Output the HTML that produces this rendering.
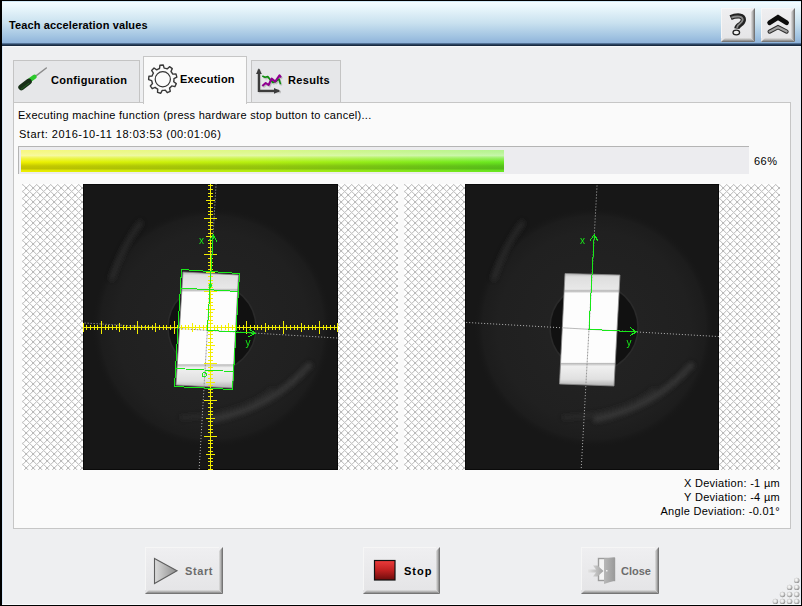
<!DOCTYPE html>
<html><head><meta charset="utf-8">
<style>
html,body{margin:0;padding:0;}
body{width:802px;height:606px;position:relative;overflow:hidden;background:#eeeff1;font-family:"Liberation Sans",sans-serif;color:#000;}
.abs{position:absolute;}

#title{left:2px;top:1px;width:799px;height:45px;
 background:linear-gradient(to bottom,#cfe8f6 0px,#cfe8f6 1px,#f4fcff 1px,#eaf7fc 6px,#c9e1ef 22px,#a6c7e3 34px,#8fb3da 42px,#6a8cb4 42px,#3a5676 43px,#1c2e46 44px,#15263b 45px);}
#titletext{left:9px;top:19px;font-size:11px;font-weight:bold;white-space:nowrap;letter-spacing:0.125px;}
.panel{left:13px;top:102px;width:778px;height:427px;background:#fafafa;border:1px solid #c6c6c6;box-sizing:border-box;}
.tab{top:60px;height:43px;background:#e6e7e9;border:1px solid #c4c4c4;border-bottom:none;box-sizing:border-box;}
.tabsel{top:56px;height:48px;background:#fafafa;border:1px solid #c6c6c6;border-bottom:none;box-sizing:border-box;}
.tablabel{font-size:11px;font-weight:bold;white-space:nowrap;}
.txt{font-size:11px;white-space:nowrap;}
</style></head><body>
<div id="title" class="abs"></div>
<div class="abs" style="left:2px;top:46px;width:799px;height:1px;background:#f8f9fa"></div>
<div id="titletext" class="abs">Teach acceleration values</div>
<svg class="abs" style="left:721px;top:8px" width="34" height="34" viewBox="0 0 34 34">
<defs>
<linearGradient id="hbf" x1="0" y1="0" x2="0" y2="1"><stop offset="0" stop-color="#efeff1"/><stop offset="1" stop-color="#e4e4e6"/></linearGradient>
<linearGradient id="hbr" x1="0" y1="0" x2="1" y2="0"><stop offset="0" stop-color="#e0e0e0"/><stop offset="0.45" stop-color="#b0b0b0"/><stop offset="1" stop-color="#646464"/></linearGradient>
<linearGradient id="hbb" x1="0" y1="0" x2="0" y2="1"><stop offset="0" stop-color="#e0e0e0"/><stop offset="0.45" stop-color="#b0b0b0"/><stop offset="1" stop-color="#646464"/></linearGradient>
</defs>
<rect x="0" y="0" width="34" height="34" fill="url(#hbf)"/>
<rect x="0" y="0" width="30" height="1" fill="#f6f6f6"/>
<rect x="0" y="0" width="1" height="30" fill="#f6f6f6"/>
<polygon points="30,4 34,0 34,34 30,30" fill="url(#hbr)"/>
<polygon points="0,34 4,30 30,30 34,34" fill="url(#hbb)"/>
<path d="M9.6 9.6 Q14 7.6 18.6 8 Q22.6 8.7 22.4 11.9 Q22 14.6 19.2 16.4 Q16.1 18.2 15.8 20.6" fill="none" stroke="#222" stroke-width="5.2" stroke-linecap="butt" stroke-linejoin="round"/>
<path d="M10.4 9.6 Q14 8.2 18.6 8.6 Q21.8 9.2 21.7 11.9 Q21.3 14.1 18.8 15.8 Q16.3 17.4 16 19.8" fill="none" stroke="#8a8a8a" stroke-width="1.9" stroke-linecap="butt" stroke-linejoin="round"/>
<ellipse cx="15.3" cy="24.5" rx="3.3" ry="2.3" fill="#f0f0f0" stroke="#222" stroke-width="1.3"/>
</svg>
<svg class="abs" style="left:761px;top:8px" width="34" height="34" viewBox="0 0 34 34">
<defs>
<linearGradient id="cbf" x1="0" y1="0" x2="0" y2="1"><stop offset="0" stop-color="#efeff1"/><stop offset="1" stop-color="#e4e4e6"/></linearGradient>
<linearGradient id="cbr" x1="0" y1="0" x2="1" y2="0"><stop offset="0" stop-color="#e0e0e0"/><stop offset="0.45" stop-color="#b0b0b0"/><stop offset="1" stop-color="#646464"/></linearGradient>
<linearGradient id="cbb" x1="0" y1="0" x2="0" y2="1"><stop offset="0" stop-color="#e0e0e0"/><stop offset="0.45" stop-color="#b0b0b0"/><stop offset="1" stop-color="#646464"/></linearGradient>
</defs>
<rect x="0" y="0" width="34" height="34" fill="url(#cbf)"/>
<rect x="0" y="0" width="30" height="1" fill="#f6f6f6"/>
<rect x="0" y="0" width="1" height="30" fill="#f6f6f6"/>
<polygon points="30,4 34,0 34,34 30,30" fill="url(#cbr)"/>
<polygon points="0,34 4,30 30,30 34,34" fill="url(#cbb)"/>
<polyline points="8.6,14.8 17,9.4 25.6,14.8" fill="none" stroke="#0c0c0c" stroke-width="4.7" stroke-linecap="round" stroke-linejoin="miter"/>
<polyline points="8.6,23.6 17,19.2 25.6,23.6" fill="none" stroke="#2a2a2a" stroke-width="4.2" stroke-linecap="round" stroke-linejoin="miter"/>
<polyline points="8.6,23.6 17,19.2 25.6,23.6" fill="none" stroke="#a0a0a0" stroke-width="2.2" stroke-linecap="round" stroke-linejoin="miter"/>
</svg>

<div class="abs tab" style="left:13px;width:127px"></div>
<div class="abs tab" style="left:251px;width:90px"></div>
<div class="abs panel"></div>
<div class="abs tabsel" style="left:143px;width:104px"></div>
<svg class="abs" style="left:14px;top:62px" width="36" height="32" viewBox="14 62 36 32">
<line x1="35" y1="76.6" x2="46.3" y2="68" stroke="#8c8c8c" stroke-width="1.5" stroke-linecap="round"/>
<line x1="30" y1="80" x2="34.5" y2="76.8" stroke="#2cc82c" stroke-width="4.4" stroke-linecap="round"/>
<line x1="21.3" y1="87.3" x2="28.8" y2="81.6" stroke="#183018" stroke-width="6" stroke-linecap="round"/>
<line x1="21.3" y1="89" x2="29" y2="83.2" stroke="#2a8a2a" stroke-width="0.9" stroke-linecap="round" opacity="0.6"/>
</svg>
<svg class="abs" style="left:144px;top:60px" width="40" height="40" viewBox="144 60 40 40">
<path d="M158.07 69.05 L159.53 68.49 L159.9 65.3 L163.25 65.01 L164.16 68.08 L165.7 68.38 L167.18 68.89 L169.51 66.69 L172.26 68.61 L170.99 71.56 L171.97 72.78 L172.78 74.12 L175.98 73.93 L176.85 77.17 L173.98 78.61 L173.96 80.18 L173.71 81.72 L176.29 83.64 L174.87 86.68 L171.74 85.94 L170.72 87.12 L169.54 88.14 L170.28 91.27 L167.24 92.69 L165.32 90.11 L163.78 90.36 L162.21 90.38 L160.77 93.25 L157.53 92.38 L157.72 89.18 L156.38 88.37 L155.16 87.39 L152.21 88.66 L150.29 85.91 L152.49 83.58 L151.98 82.1 L151.68 80.56 L148.61 79.65 L148.9 76.3 L152.09 75.93 L152.65 74.47 L153.41 73.1 L151.64 70.42 L154.02 68.04 L156.7 69.81 Z" fill="#fbfbfb" stroke="#383838" stroke-width="1.4" stroke-linejoin="round"/>
<circle cx="162.8" cy="79.2" r="7.6" fill="none" stroke="#333" stroke-width="1.2"/>
</svg>
<svg class="abs" style="left:252px;top:64px" width="34" height="32" viewBox="252 64 34 32">
<g opacity="0.35" transform="translate(1,1.2)">
<polyline points="262.3,76 265,77.3 267.8,76.6 270,79.4 272.8,82.4 276.3,81.2 279,79 280.5,84.2" fill="none" stroke="#777" stroke-width="1.8"/>
<polyline points="262.3,86 265.7,83 268.6,85 271.6,78.6 275.2,81.6 279.5,75.3 281,77.5" fill="none" stroke="#777" stroke-width="2.2"/>
<polyline points="258.9,69 258.9,90.9 280,90.9" fill="none" stroke="#888" stroke-width="2.4"/>
</g>
<polyline points="258.9,69.5 258.9,90.9 279,90.9" fill="none" stroke="#3c3c3c" stroke-width="2.3"/>
<polygon points="256,74 258.9,68.3 261.8,74" fill="#3c3c3c"/>
<polygon points="274,88 280.5,90.9 274,93.8" fill="#3c3c3c"/>
<polyline points="262.3,76 265,77.3 267.8,76.6 270,79.4 272.8,82.4 276.3,81.2 279,79 280.5,84.2" fill="none" stroke="#0c8c0c" stroke-width="1.6" stroke-linejoin="round"/>
<polyline points="262.3,86 265.7,83 268.6,85 271.6,78.6 275.2,81.6 279.5,75.3 281,77.5" fill="none" stroke="#900090" stroke-width="2.1" stroke-linejoin="round"/>
</svg>
<div class="abs tablabel" style="left:51px;top:74px;letter-spacing:0.33px">Configuration</div>
<div class="abs tablabel" style="left:180px;top:73px;letter-spacing:0.25px">Execution</div>
<div class="abs tablabel" style="left:288px;top:74px;letter-spacing:0.33px">Results</div>

<div class="abs txt" style="left:18px;top:109px;letter-spacing:0.28px">Executing machine function (press hardware stop button to cancel)...</div>
<div class="abs txt" style="left:19px;top:128px;letter-spacing:0.5px">Start: 2016-10-11 18:03:53 (00:01:06)</div>

<div class="abs" style="left:18px;top:146px;width:731px;height:28px;background:#ececef;border-top:1px solid #b4b4b4;border-left:1px solid #b4b4b4;box-sizing:border-box"></div>
<div class="abs" style="left:21px;top:150px;width:483px;height:22px;background:linear-gradient(to bottom,rgba(255,255,255,0.5) 0px,rgba(255,255,255,0.52) 2px,rgba(255,255,255,0.62) 5.5px,rgba(255,255,255,0.32) 8px,rgba(255,255,255,0.08) 11px,rgba(255,255,255,0) 12px,rgba(0,0,0,0.06) 13.5px,rgba(0,0,0,0.17) 16px,rgba(0,0,0,0.2) 19px,rgba(0,0,0,0.04) 20px,rgba(0,0,0,0) 22px),linear-gradient(to right,#f0f000,#b4f010 50%,#68e820)"></div>
<div class="abs txt" style="left:754px;top:155px;letter-spacing:0.5px">66%</div>

<svg class="abs" style="left:22px;top:184px" width="758" height="286" viewBox="0 0 758 286">
<defs>
<pattern id="h1" x="0" y="0" width="7" height="7" patternUnits="userSpaceOnUse"><rect width="7" height="7" fill="#fff"/><g shape-rendering="crispEdges"><g fill="#eeeeee"><rect x="0" y="1" width="1" height="1"/><rect x="0" y="6" width="1" height="1"/><rect x="1" y="0" width="1" height="1"/><rect x="2" y="1" width="1" height="1"/><rect x="2" y="6" width="1" height="1"/><rect x="3" y="2" width="1" height="1"/><rect x="3" y="5" width="1" height="1"/><rect x="5" y="3" width="1" height="1"/><rect x="5" y="4" width="1" height="1"/><rect x="6" y="2" width="1" height="1"/><rect x="6" y="5" width="1" height="1"/></g><g fill="#c8c8c8"><rect x="0" y="0" width="1" height="1"/><rect x="1" y="1" width="1" height="1"/><rect x="1" y="6" width="1" height="1"/><rect x="2" y="2" width="1" height="1"/><rect x="2" y="5" width="1" height="1"/><rect x="5" y="2" width="1" height="1"/><rect x="5" y="5" width="1" height="1"/><rect x="6" y="1" width="1" height="1"/><rect x="6" y="6" width="1" height="1"/></g><g fill="#bababa"><rect x="3" y="3" width="1" height="1"/><rect x="3" y="4" width="1" height="1"/><rect x="4" y="3" width="1" height="1"/><rect x="4" y="4" width="1" height="1"/></g></g></pattern>
<pattern id="h2" x="382" y="0" width="7" height="7" patternUnits="userSpaceOnUse"><rect width="7" height="7" fill="#fff"/><g shape-rendering="crispEdges"><g fill="#eeeeee"><rect x="0" y="1" width="1" height="1"/><rect x="0" y="6" width="1" height="1"/><rect x="1" y="0" width="1" height="1"/><rect x="2" y="1" width="1" height="1"/><rect x="2" y="6" width="1" height="1"/><rect x="3" y="2" width="1" height="1"/><rect x="3" y="5" width="1" height="1"/><rect x="5" y="3" width="1" height="1"/><rect x="5" y="4" width="1" height="1"/><rect x="6" y="2" width="1" height="1"/><rect x="6" y="5" width="1" height="1"/></g><g fill="#c8c8c8"><rect x="0" y="0" width="1" height="1"/><rect x="1" y="1" width="1" height="1"/><rect x="1" y="6" width="1" height="1"/><rect x="2" y="2" width="1" height="1"/><rect x="2" y="5" width="1" height="1"/><rect x="5" y="2" width="1" height="1"/><rect x="5" y="5" width="1" height="1"/><rect x="6" y="1" width="1" height="1"/><rect x="6" y="6" width="1" height="1"/></g><g fill="#bababa"><rect x="3" y="3" width="1" height="1"/><rect x="3" y="4" width="1" height="1"/><rect x="4" y="3" width="1" height="1"/><rect x="4" y="4" width="1" height="1"/></g></g></pattern>
<radialGradient id="ring"><stop offset="0" stop-color="#181818" stop-opacity="0"/><stop offset="0.38" stop-color="#222" stop-opacity="1"/><stop offset="0.8" stop-color="#202020" stop-opacity="1"/><stop offset="0.93" stop-color="#1e1e1e" stop-opacity="0.8"/><stop offset="1" stop-color="#181818" stop-opacity="0"/></radialGradient>
<linearGradient id="objg" x1="0" y1="0" x2="0" y2="1"><stop offset="0" stop-color="#b8b8b8"/><stop offset="0.03" stop-color="#dedede"/><stop offset="0.14" stop-color="#e8e8e8"/><stop offset="0.155" stop-color="#b4b4b4"/><stop offset="0.175" stop-color="#fdfdfd"/><stop offset="0.79" stop-color="#fdfdfd"/><stop offset="0.8" stop-color="#bcbcbc"/><stop offset="0.825" stop-color="#f0f0f0"/><stop offset="0.94" stop-color="#e0e0e0"/><stop offset="1" stop-color="#b0b0b0"/></linearGradient>
<filter id="sblur" x="-20%" y="-20%" width="140%" height="140%"><feGaussianBlur stdDeviation="2"/></filter>
<filter id="hblur" x="0" y="0" width="100%" height="100%"><feGaussianBlur stdDeviation="0.5"/></filter>
<filter id="blur1" x="-10%" y="-10%" width="120%" height="120%"><feGaussianBlur stdDeviation="1"/></filter>
<clipPath id="c1"><rect x="61" y="0" width="255" height="286"/></clipPath>
<clipPath id="c2"><rect x="443" y="0" width="254" height="286"/></clipPath>
<clipPath id="ob1"><polygon points="161,88 216.5,91 210.5,204 154,201"/></clipPath><clipPath id="ob2"><polygon points="543,89.5 598,91 592,202 537.5,200"/></clipPath>
</defs>
<rect x="0" y="0" width="376" height="286" fill="#fff"/><rect x="382" y="0" width="376" height="286" fill="#fff"/>
<g><rect x="0" y="0" width="376" height="286" fill="url(#h1)"/>
<rect x="382" y="0" width="376" height="286" fill="url(#h2)"/></g>
<g stroke="#ffffff" stroke-width="1" stroke-dasharray="1 2"><line x1="-413.54" y1="110.72" x2="784.34" y2="181.88"/><line x1="220.98" y1="-452.64" x2="149.82" y2="745.24"/><line x1="-32.06" y1="111.81" x2="1166.06" y2="178.79"/><line x1="600.49" y1="-453.76" x2="533.51" y2="744.36"/></g>
<g clip-path="url(#c1)"><rect x="61" y="0" width="255" height="286" fill="#171717"/><circle cx="190" cy="143.5" r="120" fill="url(#ring)"/><g fill="none" stroke-linecap="round" filter="url(#sblur)"><path d="M192 235.5 Q250 223.5 287 181.5" stroke="#383838" stroke-width="6" opacity="0.85"/><path d="M160 233.5 Q220 231.5 250 205.5" stroke="#2c2c2c" stroke-width="4" opacity="0.7"/><path d="M90 93.5 Q100 63.5 118 39.5" stroke="#2c2c2c" stroke-width="6" opacity="0.7"/></g><circle cx="190" cy="143.5" r="44" fill="#111111" stroke="#2a2a2a" stroke-width="1.5"/><polygon points="161,88 216.5,91 210.5,204 154,201" fill="url(#objg)" stroke="#8a8a8a" stroke-width="1" stroke-opacity="0.8"/><rect x="61.5" y="0.5" width="254" height="285" fill="none" stroke="#0a0a0a" stroke-width="1"/>
<g stroke-width="1" stroke-dasharray="1 2"><g stroke="#b8b8b8"><line x1="-413.54" y1="110.72" x2="784.34" y2="181.88"/><line x1="220.98" y1="-452.64" x2="149.82" y2="745.24"/></g><g stroke="#787878" stroke-dashoffset="1.5" clip-path="url(#ob1)"><line x1="-413.54" y1="110.72" x2="784.34" y2="181.88"/><line x1="220.98" y1="-452.64" x2="149.82" y2="745.24"/></g></g>
<g shape-rendering="crispEdges"><rect x="188" y="0" width="1" height="286" fill="#f2ee00"/><rect x="61" y="143" width="255" height="1" fill="#f2ee00"/><rect x="186" y="1.27" width="5" height="1" fill="#f2ee00"/><rect x="186" y="4.91" width="5" height="1" fill="#f2ee00"/><rect x="186" y="8.54" width="5" height="1" fill="#f2ee00"/><rect x="186" y="12.18" width="5" height="1" fill="#f2ee00"/><rect x="60.81" y="139" width="1" height="9" fill="#f2ee00"/><rect x="184" y="15.81" width="9" height="1" fill="#f2ee00"/><rect x="64.44" y="141" width="1" height="5" fill="#f2ee00"/><rect x="186" y="19.44" width="5" height="1" fill="#f2ee00"/><rect x="68.08" y="141" width="1" height="5" fill="#f2ee00"/><rect x="186" y="23.08" width="5" height="1" fill="#f2ee00"/><rect x="71.71" y="141" width="1" height="5" fill="#f2ee00"/><rect x="186" y="26.71" width="5" height="1" fill="#f2ee00"/><rect x="75.35" y="141" width="1" height="5" fill="#f2ee00"/><rect x="186" y="30.35" width="5" height="1" fill="#f2ee00"/><rect x="78.98" y="137" width="1" height="13" fill="#f2ee00"/><rect x="182" y="33.98" width="13" height="1" fill="#f2ee00"/><rect x="82.61" y="141" width="1" height="5" fill="#f2ee00"/><rect x="186" y="37.61" width="5" height="1" fill="#f2ee00"/><rect x="86.25" y="141" width="1" height="5" fill="#f2ee00"/><rect x="186" y="41.25" width="5" height="1" fill="#f2ee00"/><rect x="89.88" y="141" width="1" height="5" fill="#f2ee00"/><rect x="186" y="44.88" width="5" height="1" fill="#f2ee00"/><rect x="93.52" y="141" width="1" height="5" fill="#f2ee00"/><rect x="186" y="48.52" width="5" height="1" fill="#f2ee00"/><rect x="97.15" y="139" width="1" height="9" fill="#f2ee00"/><rect x="184" y="52.15" width="9" height="1" fill="#f2ee00"/><rect x="100.78" y="141" width="1" height="5" fill="#f2ee00"/><rect x="186" y="55.78" width="5" height="1" fill="#f2ee00"/><rect x="104.42" y="141" width="1" height="5" fill="#f2ee00"/><rect x="186" y="59.42" width="5" height="1" fill="#f2ee00"/><rect x="108.05" y="141" width="1" height="5" fill="#f2ee00"/><rect x="186" y="63.05" width="5" height="1" fill="#f2ee00"/><rect x="111.69" y="141" width="1" height="5" fill="#f2ee00"/><rect x="186" y="66.69" width="5" height="1" fill="#f2ee00"/><rect x="115.32" y="137" width="1" height="13" fill="#f2ee00"/><rect x="182" y="70.32" width="13" height="1" fill="#f2ee00"/><rect x="118.95" y="141" width="1" height="5" fill="#f2ee00"/><rect x="186" y="73.95" width="5" height="1" fill="#f2ee00"/><rect x="122.59" y="141" width="1" height="5" fill="#f2ee00"/><rect x="186" y="77.59" width="5" height="1" fill="#f2ee00"/><rect x="126.22" y="141" width="1" height="5" fill="#f2ee00"/><rect x="186" y="81.22" width="5" height="1" fill="#f2ee00"/><rect x="129.86" y="141" width="1" height="5" fill="#f2ee00"/><rect x="186" y="84.86" width="5" height="1" fill="#f2ee00"/><rect x="133.49" y="139" width="1" height="9" fill="#f2ee00"/><rect x="184" y="88.49" width="9" height="1" fill="#f2ee00"/><rect x="137.12" y="141" width="1" height="5" fill="#f2ee00"/><rect x="186" y="92.12" width="5" height="1" fill="#f2ee00"/><rect x="140.76" y="141" width="1" height="5" fill="#f2ee00"/><rect x="186" y="95.76" width="5" height="1" fill="#f2ee00"/><rect x="144.39" y="141" width="1" height="5" fill="#f2ee00"/><rect x="186" y="99.39" width="5" height="1" fill="#f2ee00"/><rect x="148.03" y="141" width="1" height="5" fill="#f2ee00"/><rect x="186" y="103.03" width="5" height="1" fill="#f2ee00"/><rect x="151.66" y="137" width="1" height="13" fill="#f2ee00"/><rect x="182" y="106.66" width="13" height="1" fill="#f2ee00"/><rect x="155.29" y="141" width="1" height="5" fill="#f2ee00"/><rect x="186" y="110.29" width="5" height="1" fill="#f2ee00"/><rect x="158.93" y="141" width="1" height="5" fill="#f2ee00"/><rect x="186" y="113.93" width="5" height="1" fill="#f2ee00"/><rect x="162.56" y="141" width="1" height="5" fill="#f2ee00"/><rect x="186" y="117.56" width="5" height="1" fill="#f2ee00"/><rect x="166.2" y="141" width="1" height="5" fill="#f2ee00"/><rect x="186" y="121.2" width="5" height="1" fill="#f2ee00"/><rect x="169.83" y="139" width="1" height="9" fill="#f2ee00"/><rect x="184" y="124.83" width="9" height="1" fill="#f2ee00"/><rect x="173.46" y="141" width="1" height="5" fill="#f2ee00"/><rect x="186" y="128.46" width="5" height="1" fill="#f2ee00"/><rect x="177.1" y="141" width="1" height="5" fill="#f2ee00"/><rect x="186" y="132.1" width="5" height="1" fill="#f2ee00"/><rect x="180.73" y="141" width="1" height="5" fill="#f2ee00"/><rect x="186" y="135.73" width="5" height="1" fill="#f2ee00"/><rect x="184.37" y="141" width="1" height="5" fill="#f2ee00"/><rect x="186" y="139.37" width="5" height="1" fill="#f2ee00"/><rect x="188" y="137" width="1" height="13" fill="#f2ee00"/><rect x="182" y="143" width="13" height="1" fill="#f2ee00"/><rect x="191.63" y="141" width="1" height="5" fill="#f2ee00"/><rect x="186" y="146.63" width="5" height="1" fill="#f2ee00"/><rect x="195.27" y="141" width="1" height="5" fill="#f2ee00"/><rect x="186" y="150.27" width="5" height="1" fill="#f2ee00"/><rect x="198.9" y="141" width="1" height="5" fill="#f2ee00"/><rect x="186" y="153.9" width="5" height="1" fill="#f2ee00"/><rect x="202.54" y="141" width="1" height="5" fill="#f2ee00"/><rect x="186" y="157.54" width="5" height="1" fill="#f2ee00"/><rect x="206.17" y="139" width="1" height="9" fill="#f2ee00"/><rect x="184" y="161.17" width="9" height="1" fill="#f2ee00"/><rect x="209.8" y="141" width="1" height="5" fill="#f2ee00"/><rect x="186" y="164.8" width="5" height="1" fill="#f2ee00"/><rect x="213.44" y="141" width="1" height="5" fill="#f2ee00"/><rect x="186" y="168.44" width="5" height="1" fill="#f2ee00"/><rect x="217.07" y="141" width="1" height="5" fill="#f2ee00"/><rect x="186" y="172.07" width="5" height="1" fill="#f2ee00"/><rect x="220.71" y="141" width="1" height="5" fill="#f2ee00"/><rect x="186" y="175.71" width="5" height="1" fill="#f2ee00"/><rect x="224.34" y="137" width="1" height="13" fill="#f2ee00"/><rect x="182" y="179.34" width="13" height="1" fill="#f2ee00"/><rect x="227.97" y="141" width="1" height="5" fill="#f2ee00"/><rect x="186" y="182.97" width="5" height="1" fill="#f2ee00"/><rect x="231.61" y="141" width="1" height="5" fill="#f2ee00"/><rect x="186" y="186.61" width="5" height="1" fill="#f2ee00"/><rect x="235.24" y="141" width="1" height="5" fill="#f2ee00"/><rect x="186" y="190.24" width="5" height="1" fill="#f2ee00"/><rect x="238.88" y="141" width="1" height="5" fill="#f2ee00"/><rect x="186" y="193.88" width="5" height="1" fill="#f2ee00"/><rect x="242.51" y="139" width="1" height="9" fill="#f2ee00"/><rect x="184" y="197.51" width="9" height="1" fill="#f2ee00"/><rect x="246.14" y="141" width="1" height="5" fill="#f2ee00"/><rect x="186" y="201.14" width="5" height="1" fill="#f2ee00"/><rect x="249.78" y="141" width="1" height="5" fill="#f2ee00"/><rect x="186" y="204.78" width="5" height="1" fill="#f2ee00"/><rect x="253.41" y="141" width="1" height="5" fill="#f2ee00"/><rect x="186" y="208.41" width="5" height="1" fill="#f2ee00"/><rect x="257.05" y="141" width="1" height="5" fill="#f2ee00"/><rect x="186" y="212.05" width="5" height="1" fill="#f2ee00"/><rect x="260.68" y="137" width="1" height="13" fill="#f2ee00"/><rect x="182" y="215.68" width="13" height="1" fill="#f2ee00"/><rect x="264.31" y="141" width="1" height="5" fill="#f2ee00"/><rect x="186" y="219.31" width="5" height="1" fill="#f2ee00"/><rect x="267.95" y="141" width="1" height="5" fill="#f2ee00"/><rect x="186" y="222.95" width="5" height="1" fill="#f2ee00"/><rect x="271.58" y="141" width="1" height="5" fill="#f2ee00"/><rect x="186" y="226.58" width="5" height="1" fill="#f2ee00"/><rect x="275.22" y="141" width="1" height="5" fill="#f2ee00"/><rect x="186" y="230.22" width="5" height="1" fill="#f2ee00"/><rect x="278.85" y="139" width="1" height="9" fill="#f2ee00"/><rect x="184" y="233.85" width="9" height="1" fill="#f2ee00"/><rect x="282.48" y="141" width="1" height="5" fill="#f2ee00"/><rect x="186" y="237.48" width="5" height="1" fill="#f2ee00"/><rect x="286.12" y="141" width="1" height="5" fill="#f2ee00"/><rect x="186" y="241.12" width="5" height="1" fill="#f2ee00"/><rect x="289.75" y="141" width="1" height="5" fill="#f2ee00"/><rect x="186" y="244.75" width="5" height="1" fill="#f2ee00"/><rect x="293.39" y="141" width="1" height="5" fill="#f2ee00"/><rect x="186" y="248.39" width="5" height="1" fill="#f2ee00"/><rect x="297.02" y="137" width="1" height="13" fill="#f2ee00"/><rect x="182" y="252.02" width="13" height="1" fill="#f2ee00"/><rect x="300.65" y="141" width="1" height="5" fill="#f2ee00"/><rect x="186" y="255.65" width="5" height="1" fill="#f2ee00"/><rect x="304.29" y="141" width="1" height="5" fill="#f2ee00"/><rect x="186" y="259.29" width="5" height="1" fill="#f2ee00"/><rect x="307.92" y="141" width="1" height="5" fill="#f2ee00"/><rect x="186" y="262.92" width="5" height="1" fill="#f2ee00"/><rect x="311.56" y="141" width="1" height="5" fill="#f2ee00"/><rect x="186" y="266.56" width="5" height="1" fill="#f2ee00"/><rect x="315.19" y="139" width="1" height="9" fill="#f2ee00"/><rect x="184" y="270.19" width="9" height="1" fill="#f2ee00"/><rect x="186" y="273.82" width="5" height="1" fill="#f2ee00"/><rect x="186" y="277.46" width="5" height="1" fill="#f2ee00"/><rect x="186" y="281.09" width="5" height="1" fill="#f2ee00"/><rect x="186" y="284.73" width="5" height="1" fill="#f2ee00"/></g>
<g fill="none" stroke="#18e818" stroke-width="1" shape-rendering="crispEdges">
<polygon points="159.5,85.5 217.5,89.5 210.5,205.5 152.5,202.5"/>
<line x1="158.5" y1="104" x2="216.3" y2="107.5"/>
<line x1="154" y1="184.5" x2="210.8" y2="187.5"/>
<polyline points="191.23,50.98 185.4,146.3 233.11,149.22"/><polyline points="186.84,57.22 191.23,50.98 194.83,57.71"/><polyline points="226.87,144.83 233.11,149.22 226.38,152.81"/>
<circle cx="182.4" cy="190.7" r="2"/>
</g>
<circle cx="188.4" cy="101.4" r="1.8" fill="#18e818"/>
<text x="177" y="59.5" fill="#18e818" font-size="10" font-family="Liberation Sans">x</text>
<text x="223.5" y="162" fill="#18e818" font-size="10" font-family="Liberation Sans">y</text>
</g>
<g clip-path="url(#c2)"><rect x="443" y="0" width="254" height="286" fill="#171717"/><circle cx="572" cy="143.5" r="120" fill="url(#ring)"/><g fill="none" stroke-linecap="round" filter="url(#sblur)"><path d="M574 235.5 Q632 223.5 669 181.5" stroke="#383838" stroke-width="6" opacity="0.85"/><path d="M542 233.5 Q602 231.5 632 205.5" stroke="#2c2c2c" stroke-width="4" opacity="0.7"/><path d="M472 93.5 Q482 63.5 500 39.5" stroke="#2c2c2c" stroke-width="6" opacity="0.7"/></g><circle cx="572" cy="143.5" r="44" fill="#111111" stroke="#2a2a2a" stroke-width="1.5"/><polygon points="543,89.5 598,91 592,202 537.5,200" fill="url(#objg)" stroke="#8a8a8a" stroke-width="1" stroke-opacity="0.8"/><rect x="443.5" y="0.5" width="253" height="285" fill="none" stroke="#0a0a0a" stroke-width="1"/>
<g stroke-width="1" stroke-dasharray="1 2"><g stroke="#b8b8b8"><line x1="-32.06" y1="111.81" x2="1166.06" y2="178.79"/><line x1="600.49" y1="-453.76" x2="533.51" y2="744.36"/></g><g stroke="#787878" stroke-dashoffset="1.5" clip-path="url(#ob2)"><line x1="-32.06" y1="111.81" x2="1166.06" y2="178.79"/><line x1="600.49" y1="-453.76" x2="533.51" y2="744.36"/></g></g>
<g fill="none" stroke="#18e818" stroke-width="1" shape-rendering="crispEdges"><polyline points="572.3,50.45 567,145.3 614.43,147.95"/><polyline points="567.95,56.71 572.3,50.45 575.93,57.16"/><polyline points="608.16,143.59 614.43,147.95 607.71,151.58"/></g>
<text x="558" y="59.5" fill="#18e818" font-size="10" font-family="Liberation Sans">x</text>
<text x="604.5" y="162" fill="#18e818" font-size="10" font-family="Liberation Sans">y</text>
</g>
</svg>

<div class="abs txt" style="right:22px;top:477px;text-align:right;letter-spacing:0.3px">X Deviation: -1 µm</div>
<div class="abs txt" style="right:22px;top:491px;text-align:right;letter-spacing:0.3px">Y Deviation: -4 µm</div>
<div class="abs txt" style="right:22px;top:505px;text-align:right;letter-spacing:0.3px">Angle Deviation: -0.01°</div>

<svg class="abs" style="left:145px;top:547px" width="78" height="47" viewBox="0 0 78 47">
<defs>
<linearGradient id="sb1f" x1="0" y1="0" x2="0" y2="1"><stop offset="0" stop-color="#efeff1"/><stop offset="1" stop-color="#e4e4e6"/></linearGradient>
<linearGradient id="sb1r" x1="0" y1="0" x2="1" y2="0"><stop offset="0" stop-color="#e0e0e0"/><stop offset="0.45" stop-color="#b0b0b0"/><stop offset="1" stop-color="#646464"/></linearGradient>
<linearGradient id="sb1b" x1="0" y1="0" x2="0" y2="1"><stop offset="0" stop-color="#e0e0e0"/><stop offset="0.45" stop-color="#b0b0b0"/><stop offset="1" stop-color="#646464"/></linearGradient>
</defs>
<rect x="0" y="0" width="78" height="47" fill="url(#sb1f)"/>
<rect x="0" y="0" width="74" height="1" fill="#f6f6f6"/>
<rect x="0" y="0" width="1" height="43" fill="#f6f6f6"/>
<polygon points="74,4 78,0 78,47 74,43" fill="url(#sb1r)"/>
<polygon points="0,47 4,43 74,43 78,47" fill="url(#sb1b)"/>

</svg>
<svg class="abs" style="left:363px;top:547px" width="77" height="47" viewBox="0 0 77 47">
<defs>
<linearGradient id="sb2f" x1="0" y1="0" x2="0" y2="1"><stop offset="0" stop-color="#efeff1"/><stop offset="1" stop-color="#e4e4e6"/></linearGradient>
<linearGradient id="sb2r" x1="0" y1="0" x2="1" y2="0"><stop offset="0" stop-color="#e0e0e0"/><stop offset="0.45" stop-color="#b0b0b0"/><stop offset="1" stop-color="#646464"/></linearGradient>
<linearGradient id="sb2b" x1="0" y1="0" x2="0" y2="1"><stop offset="0" stop-color="#e0e0e0"/><stop offset="0.45" stop-color="#b0b0b0"/><stop offset="1" stop-color="#646464"/></linearGradient>
</defs>
<rect x="0" y="0" width="77" height="47" fill="url(#sb2f)"/>
<rect x="0" y="0" width="73" height="1" fill="#f6f6f6"/>
<rect x="0" y="0" width="1" height="43" fill="#f6f6f6"/>
<polygon points="73,4 77,0 77,47 73,43" fill="url(#sb2r)"/>
<polygon points="0,47 4,43 73,43 77,47" fill="url(#sb2b)"/>

</svg>
<svg class="abs" style="left:581px;top:547px" width="78" height="47" viewBox="0 0 78 47">
<defs>
<linearGradient id="sb3f" x1="0" y1="0" x2="0" y2="1"><stop offset="0" stop-color="#efeff1"/><stop offset="1" stop-color="#e4e4e6"/></linearGradient>
<linearGradient id="sb3r" x1="0" y1="0" x2="1" y2="0"><stop offset="0" stop-color="#e0e0e0"/><stop offset="0.45" stop-color="#b0b0b0"/><stop offset="1" stop-color="#646464"/></linearGradient>
<linearGradient id="sb3b" x1="0" y1="0" x2="0" y2="1"><stop offset="0" stop-color="#e0e0e0"/><stop offset="0.45" stop-color="#b0b0b0"/><stop offset="1" stop-color="#646464"/></linearGradient>
</defs>
<rect x="0" y="0" width="78" height="47" fill="url(#sb3f)"/>
<rect x="0" y="0" width="74" height="1" fill="#f6f6f6"/>
<rect x="0" y="0" width="1" height="43" fill="#f6f6f6"/>
<polygon points="74,4 78,0 78,47 74,43" fill="url(#sb3r)"/>
<polygon points="0,47 4,43 74,43 78,47" fill="url(#sb3b)"/>

</svg>
<svg class="abs" style="left:150px;top:555px" width="32" height="32" viewBox="150 555 32 32">
<defs><linearGradient id="trig" x1="0" y1="0" x2="1" y2="0"><stop offset="0" stop-color="#dcdcdc"/><stop offset="1" stop-color="#8c8c8c"/></linearGradient></defs>
<polygon points="154.5,558.5 177,570.8 154.5,583.5" fill="url(#trig)" stroke="#5e5e5e" stroke-width="1.1" stroke-linejoin="miter"/>
</svg>
<svg class="abs" style="left:372px;top:558px" width="26" height="24" viewBox="372 558 26 24">
<defs><linearGradient id="redg" x1="0" y1="0" x2="0" y2="1"><stop offset="0" stop-color="#ec3c3c"/><stop offset="0.5" stop-color="#c02020"/><stop offset="1" stop-color="#6c0c0c"/></linearGradient></defs>
<rect x="374.5" y="560.5" width="20.5" height="19.5" fill="url(#redg)" stroke="#111" stroke-width="1.2"/>
</svg>
<svg class="abs" style="left:586px;top:555px" width="32" height="32" viewBox="586 555 32 32">
<defs>
<linearGradient id="doorg" x1="0" y1="0" x2="1" y2="0"><stop offset="0" stop-color="#b8b8b8"/><stop offset="1" stop-color="#9a9a9a"/></linearGradient>
<linearGradient id="arrg" x1="0" y1="0" x2="1" y2="0"><stop offset="0" stop-color="#e4e4e4"/><stop offset="1" stop-color="#a0a0a0"/></linearGradient>
</defs>
<rect x="598.5" y="558.5" width="16" height="22" fill="#f4f4f4" stroke="#9c9c9c" stroke-width="1.4"/>
<polygon points="604,558.5 614.8,557.2 614.8,580.5 604,584" fill="url(#doorg)"/>
<rect x="606" y="570" width="1.5" height="1.5" fill="#eee"/>
<polygon points="588,569.5 596,569.5 593,565.5 597.5,565.5 603.5,571 597.5,576.5 593,576.5 596,572.5 588,572.5" fill="url(#arrg)"/>
</svg>
<div class="abs tablabel" style="left:185px;top:565px;color:#6c6c6c;letter-spacing:0.6px">Start</div>
<div class="abs tablabel" style="left:404px;top:565px;letter-spacing:1px">Stop</div>
<div class="abs tablabel" style="left:621px;top:565px;color:#6c6c6c;letter-spacing:0px">Close</div>
<svg class="abs" style="left:770px;top:575px" width="31" height="30" viewBox="770 575 31 30"><defs><radialGradient id="dotg" cx="0.42" cy="0.4" r="0.62"><stop offset="0" stop-color="#ffffff"/><stop offset="0.45" stop-color="#e0e0e0"/><stop offset="0.8" stop-color="#a8a8a8"/><stop offset="1" stop-color="#7c7c7c"/></radialGradient></defs><circle cx="775.4" cy="601.5" r="2.7" fill="url(#dotg)"/><circle cx="782.5" cy="601.5" r="2.7" fill="url(#dotg)"/><circle cx="789.6" cy="601.5" r="2.7" fill="url(#dotg)"/><circle cx="796.7" cy="601.5" r="2.7" fill="url(#dotg)"/><circle cx="782.5" cy="594.5" r="2.7" fill="url(#dotg)"/><circle cx="789.6" cy="594.5" r="2.7" fill="url(#dotg)"/><circle cx="796.7" cy="594.5" r="2.7" fill="url(#dotg)"/><circle cx="789.6" cy="587.4" r="2.7" fill="url(#dotg)"/><circle cx="796.7" cy="587.4" r="2.7" fill="url(#dotg)"/><circle cx="796.7" cy="580.4" r="2.7" fill="url(#dotg)"/></svg>

<div class="abs" style="left:0;top:0;width:2px;height:606px;background:#000"></div>
<div class="abs" style="left:2px;top:46px;width:1px;height:559px;background:#d4e6f8"></div>
<div class="abs" style="left:3px;top:47px;width:1px;height:557px;background:#f3f3f4"></div>
<div class="abs" style="left:800px;top:46px;width:1px;height:559px;background:#e4f0f8"></div>
<div class="abs" style="left:2px;top:604px;width:799px;height:1px;background:#f8fafc"></div>
<div class="abs" style="left:801px;top:0;width:1px;height:606px;background:#000"></div>
<div class="abs" style="left:0;top:0;width:802px;height:1px;background:#000"></div>
<div class="abs" style="left:0;top:605px;width:802px;height:1px;background:#000"></div>
</body></html>
